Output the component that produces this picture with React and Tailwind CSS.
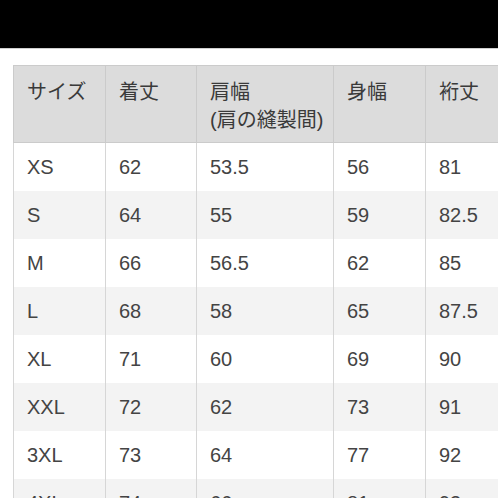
import React from 'react';

const headers = ['サイズ', '着丈', '肩幅\n(肩の縫製間)', '身幅', '裄丈'];

const rows = [
  ['XS', '62', '53.5', '56', '81'],
  ['S', '64', '55', '59', '82.5'],
  ['M', '66', '56.5', '62', '85'],
  ['L', '68', '58', '65', '87.5'],
  ['XL', '71', '60', '69', '90'],
  ['XXL', '72', '62', '73', '91'],
  ['3XL', '73', '64', '77', '92'],
  ['4XL', '74', '66', '81', '93'],
];

const widths = ['w-[92px]', 'w-[91px]', 'w-[137px]', 'w-[92px]', 'w-[92px]'];

export default function App() {
  return (
    <div className="w-[498px] h-[498px] overflow-hidden bg-white" style={{ fontFamily: '"Liberation Sans", "Noto Sans CJK JP", sans-serif' }}>
      {/* top bar */}
      <div className="h-[49px] bg-black border-b border-[#cfcfcf]"></div>
      <div className="pl-[13px] pt-[16px] overflow-hidden">
        <table className="border-collapse table-fixed w-[504px] text-[20px] text-[#444]">
          <thead>
            <tr className="bg-[#dcdcdc]">
              {headers.map((h, i) => (
                <th
                  key={i}
                  className={`${widths[i]} h-[77px] align-top text-left font-normal text-[20px] text-[#3a3a3a] pl-[13px] pt-[12px] leading-[28px] border border-[#cbcbcb] whitespace-pre-line`}
                >
                  {h}
                </th>
              ))}
            </tr>
          </thead>
          <tbody>
            {rows.map((r, ri) => (
              <tr key={ri} className={ri % 2 === 1 ? 'bg-[#f3f3f3]' : 'bg-white'}>
                {r.map((c, ci) => (
                  <td key={ci} className="h-[48px] pl-[13px] border-x border-[#d6d6d6] align-middle">
                    {c}
                  </td>
                ))}
              </tr>
            ))}
          </tbody>
        </table>
      </div>
    </div>
  );
}
